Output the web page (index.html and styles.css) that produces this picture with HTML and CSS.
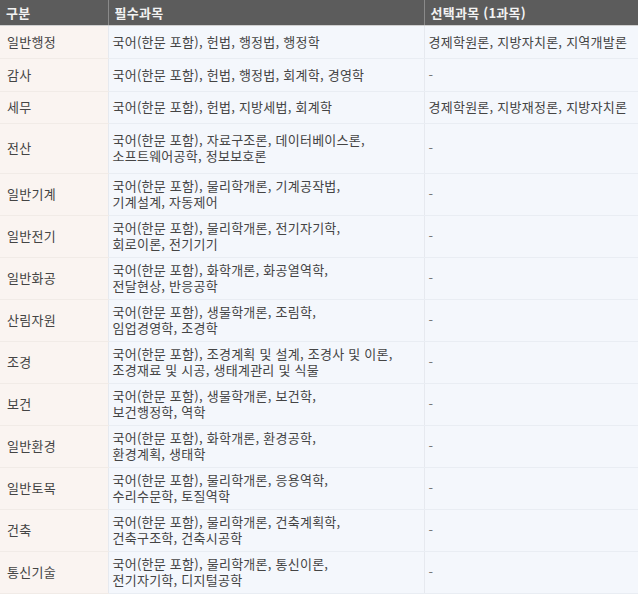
FILE: index.html
```html
<!DOCTYPE html>
<html lang="ko">
<head>
<meta charset="utf-8">
<link rel="stylesheet" href="styles.css">
</head>
<body>
<table class="subjects">
  <colgroup>
    <col class="c1"><col class="c2"><col class="c3">
  </colgroup>
  <thead>
    <tr class="head">
      <th>구분</th><th>필수과목</th><th>선택과목 (1과목)</th>
    </tr>
  </thead>
  <tbody>
    <tr class="r1"><td>일반행정</td><td>국어(한문 포함), 헌법, 행정법, 행정학</td><td>경제학원론, 지방자치론, 지역개발론</td></tr>
    <tr class="r1"><td>감사</td><td>국어(한문 포함), 헌법, 행정법, 회계학, 경영학</td><td class="dash">-</td></tr>
    <tr class="r1b"><td>세무</td><td>국어(한문 포함), 헌법, 지방세법, 회계학</td><td>경제학원론, 지방재정론, 지방자치론</td></tr>
    <tr class="r3"><td>전산</td><td>국어(한문 포함), 자료구조론, 데이터베이스론,<br>소프트웨어공학, 정보보호론</td><td class="dash">-</td></tr>
    <tr class="r2"><td>일반기계</td><td>국어(한문 포함), 물리학개론, 기계공작법,<br>기계설계, 자동제어</td><td class="dash">-</td></tr>
    <tr class="r2"><td>일반전기</td><td>국어(한문 포함), 물리학개론, 전기자기학,<br>회로이론, 전기기기</td><td class="dash">-</td></tr>
    <tr class="r2"><td>일반화공</td><td>국어(한문 포함), 화학개론, 화공열역학,<br>전달현상, 반응공학</td><td class="dash">-</td></tr>
    <tr class="r2"><td>산림자원</td><td>국어(한문 포함), 생물학개론, 조림학,<br>임업경영학, 조경학</td><td class="dash">-</td></tr>
    <tr class="r2"><td>조경</td><td>국어(한문 포함), 조경계획 및 설계, 조경사 및 이론,<br>조경재료 및 시공, 생태계관리 및 식물</td><td class="dash">-</td></tr>
    <tr class="r2"><td>보건</td><td>국어(한문 포함), 생물학개론, 보건학,<br>보건행정학, 역학</td><td class="dash">-</td></tr>
    <tr class="r2"><td>일반환경</td><td>국어(한문 포함), 화학개론, 환경공학,<br>환경계획, 생태학</td><td class="dash">-</td></tr>
    <tr class="r2"><td>일반토목</td><td>국어(한문 포함), 물리학개론, 응용역학,<br>수리수문학, 토질역학</td><td class="dash">-</td></tr>
    <tr class="r2"><td>건축</td><td>국어(한문 포함), 물리학개론, 건축계획학,<br>건축구조학, 건축시공학</td><td class="dash">-</td></tr>
    <tr class="r2"><td>통신기술</td><td>국어(한문 포함), 물리학개론, 통신이론,<br>전기자기학, 디지털공학</td><td class="dash">-</td></tr>
  </tbody>
</table>
</body>
</html>
```

FILE: styles.css
```css
html, body {
  margin: 0;
  padding: 0;
  background: #ffffff;
}

body {
  font-family: "Noto Sans CJK KR", "Noto Sans", sans-serif;
  font-size: 13px;
  letter-spacing: 0.25px;
  color: #444444;
  overflow: hidden;
}

.subjects {
  width: 638px;
  border-collapse: collapse;
  table-layout: fixed;
}

.c1 { width: 108px; }
.c2 { width: 316px; }
.c3 { width: 214px; }

.head {
  height: 25px;
}

.head th {
  background: #5c5c5c;
  color: #f2f2f2;
  font-weight: 700;
  text-align: left;
  padding: 0 4px 0 6px;
  border-left: 1px solid #8a8a8a;
  border-bottom: 1px solid #d0d0d0;
  line-height: 17px;
}

.head th:first-child {
  border-left: none;
}

td {
  padding: 0 4px 0 4px;
  line-height: 16px;
  vertical-align: middle;
  background: #f4f7fc;
  border-bottom: 1px solid #e9edf3;
  border-left: 1px solid #e6e9ef;
  white-space: nowrap;
}

td:first-child {
  background: #faf4f1;
  border-left: none;
  padding-left: 7px;
  border-bottom-color: #f1ebe7;
}

.r1 { height: 33px; }
.r1b { height: 32px; }
.r3 { height: 50px; }
.r2 { height: 42px; }

.dash {
  color: #777777;
}
```
